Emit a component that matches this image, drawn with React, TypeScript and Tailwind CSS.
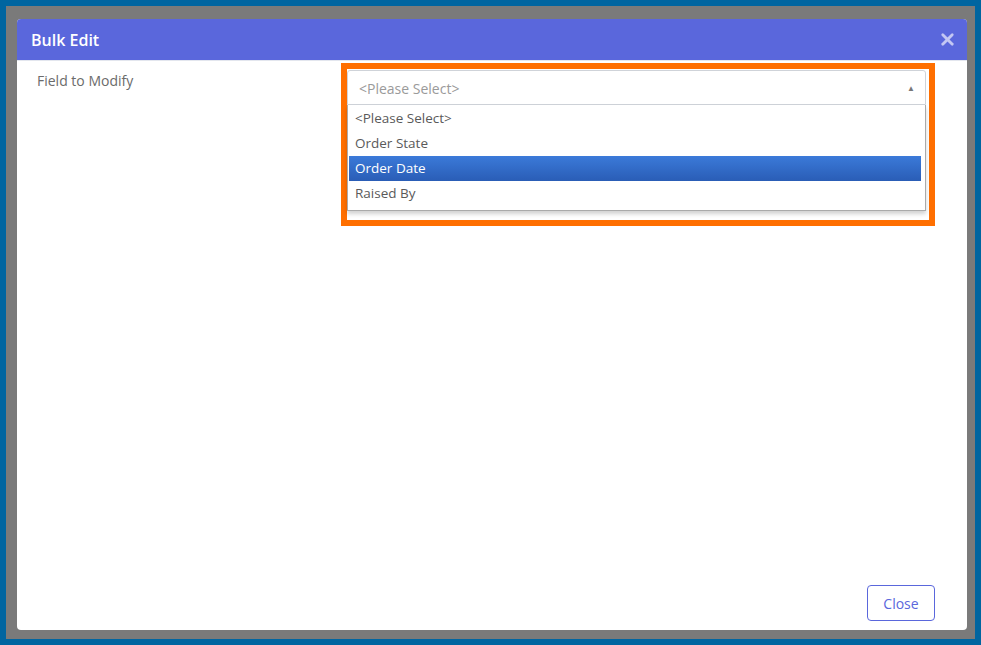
import { X } from "lucide-react";

const options = ["<Please Select>", "Order State", "Order Date", "Raised By"];

export default function App() {
  return (
    <div
      className="h-[645px] w-[981px] border-[6px] border-[#0065a0] bg-[#7a7a7a] pl-[11px] pt-[13px]"
      style={{ fontFamily: '"Open Sans", "Noto Sans", sans-serif' }}
    >
      <div className="flex h-[611px] w-[950px] flex-col overflow-hidden rounded-[4px] bg-white">
        <div className="flex h-[42px] items-center justify-between border-b border-[#e3e6ee] bg-[#5a67dc] pl-[14px] pr-[10px]">
          <span className="text-[16px] font-semibold text-white">Bulk Edit</span>
          <X size={19} strokeWidth={3.5} className="text-[#c3c7f3]" />
        </div>

        <div className="flex flex-1 px-[20px] pt-[2px]">
          <div className="w-[304px] pt-[7px] text-[14px] text-[#6b6b6b]">Field to Modify</div>
          <div className="h-[163px] w-[594px] border-[6px] border-[#ff6f00] pr-[3px] pt-[1px]">
            <div className="flex h-[35px] items-center justify-between rounded-t-[3px] border border-[#cfd3d9] pl-[11px] pr-[10px]">
              <span className="pt-[2px] text-[14px] text-[#9a9a9a]">&lt;Please Select&gt;</span>
              <span className="text-[8px] text-[#777]">▲</span>
            </div>
            <div className="border border-t-0 border-[#aaaaaa] px-[1px] pb-[4px] pr-[4px] pt-[1px] shadow-[0_3px_4px_rgba(0,0,0,0.18)]">
              {options.map((o) => (
                <div
                  key={o}
                  className={
                    o === "Order Date"
                      ? "flex h-[25px] items-center bg-gradient-to-b from-[#3b7ad9] to-[#2a5db6] px-[6px] text-[13.5px] text-white"
                      : "flex h-[25px] items-center px-[6px] text-[13.5px] text-[#5a5a5a]"
                  }
                >
                  {o}
                </div>
              ))}
            </div>
          </div>
        </div>

        <div className="flex justify-end pb-[9px] pr-[32px]">
          <button
            type="button"
            className="h-[36px] w-[68px] rounded-[4px] border border-[#5a67dc] text-[14px] text-[#5a67dc]"
          >
            Close
          </button>
        </div>
      </div>
    </div>
  );
}
